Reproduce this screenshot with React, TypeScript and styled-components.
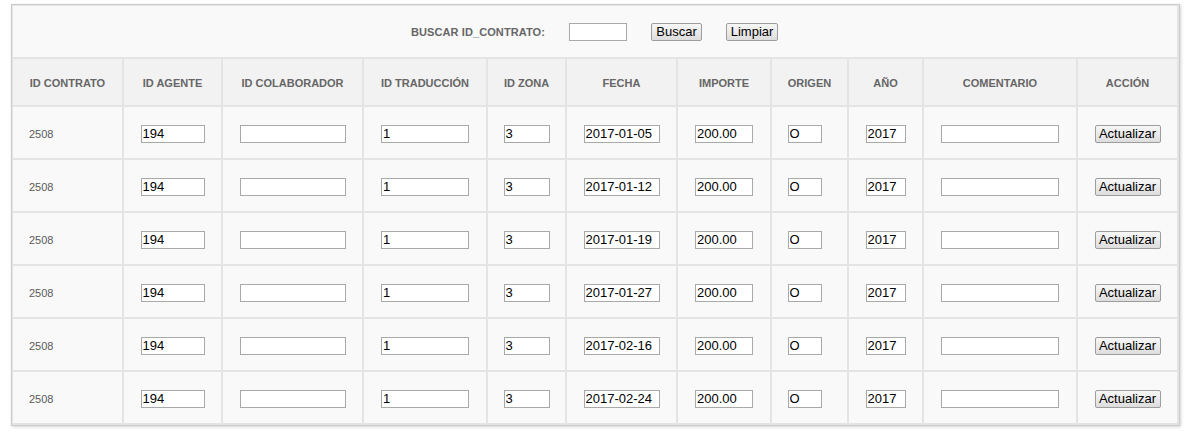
import styled, { createGlobalStyle } from "styled-components";

const GlobalStyle = createGlobalStyle`
body {
    margin: 0;
    background: #ffffff;
    font-family: "Liberation Sans", Arial, sans-serif;
}
`

const StyledPage = styled.div`
padding: 4px 0 0 11px;
`
const StyledPanel = styled.div`
display: inline-block;
border: 1px solid #cccccc;
box-shadow: 1px 1px 3px rgba(0, 0, 0, 0.18);
background: #e4e4e4;
`
const StyledTable = styled.table`
border-collapse: separate;
border-spacing: 2px;
table-layout: fixed;
margin: -1px 0 0 -1px;
`
const StyledSearchCell = styled.td`
height: 51px;
padding: 0;
background: #f9f9f9;
`
const StyledSearchBar = styled.div`
display: flex;
justify-content: center;
align-items: center;
gap: 24px;
padding-right: 1px;
`
const StyledLabel = styled.span`
font-size: 11px;
font-weight: 700;
color: #666666;
letter-spacing: 0.1px;
`
const StyledHeadCell = styled.th`
height: 44px;
padding: 2px 0 0 0;
background: #f2f2f2;
font-size: 11px;
font-weight: 700;
color: #666666;
text-align: center;
vertical-align: middle;
`
const StyledCell = styled.td<{ $left?: boolean; $padRight?: number }>`
height: 49px;
padding: ${p => (p.$left ? "2px 0 0 16px" : `2px ${p.$padRight ?? 0}px 0 0`)};
background: #f9f9f9;
font-size: 11px;
color: #595959;
text-align: ${p => (p.$left ? "left" : "center")};
vertical-align: middle;
`
const StyledInput = styled.input<{ $w: number }>`
box-sizing: border-box;
width: ${p => p.$w}px;
height: 18px;
padding: 0 1px;
margin: 0;
border: 1px solid #a9a9a9;
background: #ffffff;
font-family: "Liberation Sans", Arial, sans-serif;
font-size: 13px;
color: #000000;
vertical-align: middle;
outline: none;
`
const StyledButton = styled.button<{ $w: number }>`
box-sizing: border-box;
width: ${p => p.$w}px;
height: 18px;
padding: 0;
margin: 0;
border: 1px solid #9d9d9d;
border-radius: 2px;
background: linear-gradient(#f7f7f7, #dddddd);
font-family: "Liberation Sans", Arial, sans-serif;
font-size: 13px;
line-height: 16px;
color: #000000;
vertical-align: middle;
`

const colWidths = [109, 97, 139, 122, 77, 109, 92, 75, 73, 152, 99]
const headers = ["ID CONTRATO", "ID AGENTE", "ID COLABORADOR", "ID TRADUCCIÓN", "ID ZONA", "FECHA", "IMPORTE", "ORIGEN", "AÑO", "COMENTARIO", "ACCIÓN"]
const fechas = ["2017-01-05", "2017-01-12", "2017-01-19", "2017-01-27", "2017-02-16", "2017-02-24"]

export default function App() {
    return (
        <StyledPage>
            <GlobalStyle />
            <StyledPanel>
                <StyledTable>
                    <colgroup>
                        {colWidths.map((w, i) => <col key={i} style={{ width: w }} />)}
                    </colgroup>
                    <tbody>
                        <tr>
                            <StyledSearchCell colSpan={11}>
                                <StyledSearchBar>
                                    <StyledLabel>BUSCAR ID_CONTRATO:</StyledLabel>
                                    <StyledInput $w={58} />
                                    <StyledButton $w={51}>Buscar</StyledButton>
                                    <StyledButton $w={52}>Limpiar</StyledButton>
                                </StyledSearchBar>
                            </StyledSearchCell>
                        </tr>
                        <tr>
                            {headers.map(h => <StyledHeadCell key={h}>{h}</StyledHeadCell>)}
                        </tr>
                        {fechas.map(f => (
                            <tr key={f}>
                                <StyledCell $left>2508</StyledCell>
                                <StyledCell><StyledInput $w={64} defaultValue="194" /></StyledCell>
                                <StyledCell><StyledInput $w={106} /></StyledCell>
                                <StyledCell><StyledInput $w={88} defaultValue="1" /></StyledCell>
                                <StyledCell><StyledInput $w={46} defaultValue="3" /></StyledCell>
                                <StyledCell><StyledInput $w={76} defaultValue={f} /></StyledCell>
                                <StyledCell><StyledInput $w={58} defaultValue="200.00" /></StyledCell>
                                <StyledCell $padRight={10}><StyledInput $w={34} defaultValue="O" /></StyledCell>
                                <StyledCell><StyledInput $w={40} defaultValue="2017" /></StyledCell>
                                <StyledCell><StyledInput $w={118} /></StyledCell>
                                <StyledCell><StyledButton $w={66}>Actualizar</StyledButton></StyledCell>
                            </tr>
                        ))}
                    </tbody>
                </StyledTable>
            </StyledPanel>
        </StyledPage>
    )
}
